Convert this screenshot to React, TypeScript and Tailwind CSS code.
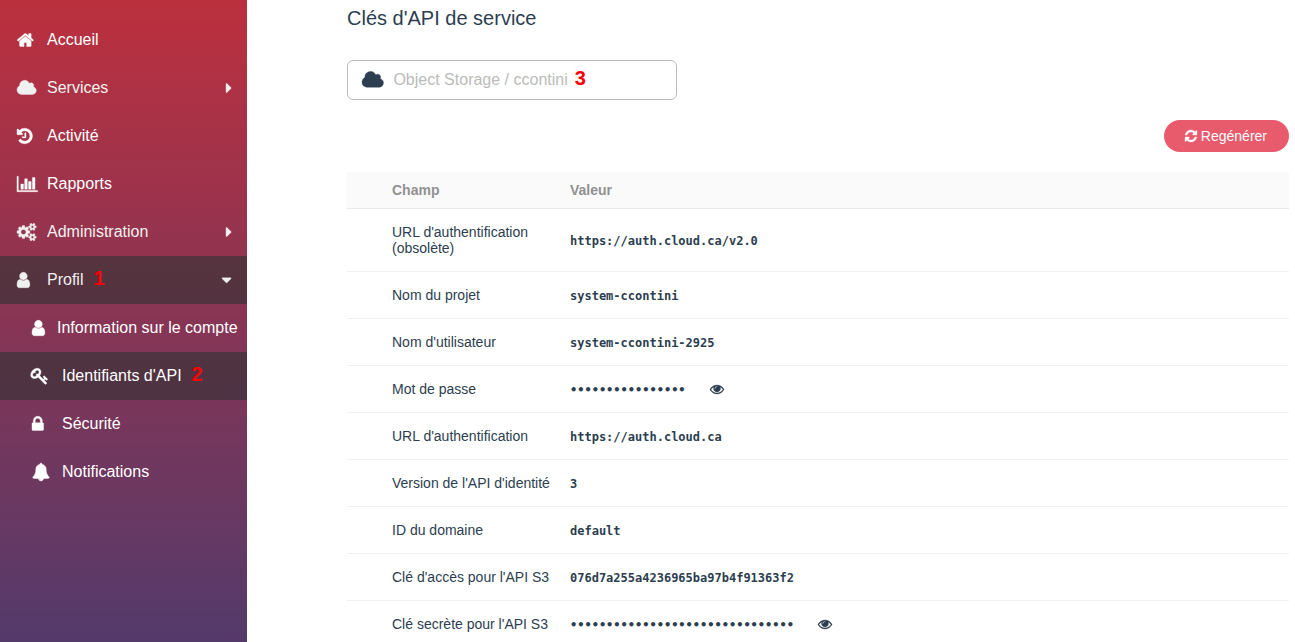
import { useState, type ReactNode } from "react";

const GLYPHS = {
  home: {
    box: "64 0 1664 1792",
    d: "M1472 992v480q0 26-19 45t-45 19h-384v-384h-256v384h-384q-26 0-45-19t-19-45v-480q0-1 .5-3t.5-3l575-474 575 474q1 2 1 6zm223-69l-62 74q-8 9-21 11h-3q-13 0-21-7l-692-577-692 577q-12 8-24 7-13-2-21-11l-62-74q-8-10-7-23.5t11-21.5l719-599q32-26 76-26t76 26l244 204v-195q0-14 9-23t23-9h192q14 0 23 9t9 23v408l219 182q10 8 11 21.5t-7 23.5z",
  },
  cloud: {
    box: "64 0 1920 1792",
    d: "M1984 1152q0 159-112.5 271.5t-271.5 112.5h-1088q-185 0-316.5-131.5t-131.5-316.5q0-132 71-241.5t187-163.5q-2-28-2-43 0-212 150-362t362-150q158 0 286.5 88t187.5 230q70-62 166-62 106 0 181 75t75 181q0 75-41 138 129 30 213 134.5t84 239.5z",
  },
  history: {
    box: "128 0 1536 1792",
    d: "M1664 896q0 156-61 298t-164 245-245 164-298 61q-172 0-327-72.5t-264-204.5q-7-10-6.5-22.5t8.5-20.5l137-138q10-9 25-9 16 2 23 12 73 95 179 147t225 52q104 0 198.5-40.5t163.5-109.5 109.5-163.5 40.5-198.5-40.5-198.5-109.5-163.5-163.5-109.5-198.5-40.5q-98 0-188 35.5t-160 101.5l137 138q31 30 14 69-17 40-59 40h-448q-26 0-45-19t-19-45v-448q0-42 40-59 39-17 69 14l130 129q107-101 244.5-156.5t284.5-55.5q156 0 298 61t245 164 164 245 61 298zm-640-288v448q0 14-9 23t-23 9h-320q-14 0-23-9t-9-23v-64q0-14 9-23t23-9h224v-352q0-14 9-23t23-9h64q14 0 23 9t9 23z",
  },
  chart: {
    box: "0 0 2048 1792",
    d: "M640 896v512h-256v-512h256zm384-512v1024h-256v-1024h256zm1024 1152v128h-2048v-1536h128v1408h1920zm-640-896v768h-256v-768h256zm384-384v1152h-256v-1152h256z",
  },
  cogs: {
    box: "-64 0 1920 1792",
    d: "M832 896q0-106-75-181t-181-75-181 75-75 181 75 181 181 75 181-75 75-181zm768 512q0-52-38-90t-90-38-90 38-38 90q0 53 37.5 90.5t90.5 37.5 90.5-37.5 37.5-90.5zm0-1024q0-52-38-90t-90-38-90 38-38 90q0 53 37.5 90.5t90.5 37.5 90.5-37.5 37.5-90.5zm-384 421v185q0 10-7 19.5t-16 10.5l-155 24q-11 35-32 76 34 48 90 115 7 11 7 20 0 12-7 19-23 30-82.5 89.5t-78.5 59.5q-11 0-21-7l-115-90q-37 19-77 31-11 108-23 155-7 24-30 24h-186q-11 0-20-7.5t-10-17.5l-23-153q-34-10-75-31l-118 89q-7 7-20 7-11 0-21-8-144-133-144-160 0-9 7-19 10-14 41-53t47-61q-23-44-35-82l-152-24q-10-1-17-9.5t-7-19.5v-185q0-10 7-19.5t16-10.5l155-24q11-35 32-76-34-48-90-115-7-11-7-20 0-12 7-20 22-30 82-89t79-59q11 0 21 7l115 90q34-18 77-32 11-108 23-154 7-24 30-24h186q11 0 20 7.5t10 17.5l23 153q34 10 75 31l118-89q8-7 20-7 11 0 21 8 144 133 144 160 0 9-7 19-12 16-42 54t-45 60q23 48 34 82l152 23q10 2 17 10.5t7 19.5zm640 533v140q0 16-149 31-12 27-30 52 51 113 51 138 0 4-4 7-122 71-124 71-8 0-46-47t-52-68q-20 2-30 2t-30-2q-14 21-52 68t-46 47q-2 0-124-71-4-3-4-7 0-25 51-138-18-25-30-52-149-15-149-31v-140q0-16 149-31 13-29 30-52-51-113-51-138 0-4 4-7 4-2 35-20t59-34 30-16q8 0 46 46.5t52 67.5q20-2 30-2t30 2q51-71 92-112l6-2q4 0 124 70 4 3 4 7 0 25-51 138 17 23 30 52 149 15 149 31zm0-1024v140q0 16-149 31-12 27-30 52 51 113 51 138 0 4-4 7-122 71-124 71-8 0-46-47t-52-68q-20 2-30 2t-30-2q-14 21-52 68t-46 47q-2 0-124-71-4-3-4-7 0-25 51-138-18-25-30-52-149-15-149-31v-140q0-16 149-31 13-29 30-52-51-113-51-138 0-4 4-7 4-2 35-20t59-34 30-16q8 0 46 46.5t52 67.5q20-2 30-2t30 2q51-71 92-112l6-2q4 0 124 70 4 3 4 7 0 25-51 138 17 23 30 52 149 15 149 31z",
  },
  user: {
    box: "256 0 1280 1792",
    d: "M1536 1399q0 109-62.5 187t-150.5 78h-854q-88 0-150.5-78t-62.5-187q0-85 8.5-160.5t31.5-152 58.5-131 94-89 134.5-34.5q131 128 313 128t313-128q76 0 134.5 34.5t94 89 58.5 131 31.5 152 8.5 160.5zm-256-887q0 159-112.5 271.5t-271.5 112.5-271.5-112.5-112.5-271.5 112.5-271.5 271.5-112.5 271.5 112.5 112.5 271.5z",
  },
  key: {
    box: "128 0 1664 1792",
    d: "M832 512q0-80-56-136t-136-56-136 56-56 136q0 42 19 83-41-19-83-19-80 0-136 56t-56 136 56 136 136 56 136-56 56-136q0-42-19-83 41 19 83 19 80 0 136-56t56-136zm851 704q0 17-49 66t-66 49q-9 0-28.5-16t-36.5-33-38.5-40-24.5-26l-96 96 220 220q28 28 28 68 0 42-39 81t-81 39q-40 0-68-28l-671-671q-176 131-365 131-163 0-265.5-102.5t-102.5-265.5q0-160 95-313t248-248 313-95q163 0 265.5 102.5t102.5 265.5q0 189-131 365l355 355 96-96q-3-3-26-24.5t-40-38.5-33-36.5-16-28.5q0-17 49-66t66-49q13 0 23 10 6 6 46 44.5t82 79.5 86.5 86 73 78 28.5 41z",
  },
  lock: {
    box: "320 0 1152 1792",
    d: "M640 768h512v-192q0-106-75-181t-181-75-181 75-75 181v192zm832 96v576q0 40-28 68t-68 28h-960q-40 0-68-28t-28-68v-576q0-40 28-68t68-28h32v-192q0-184 132-316t316-132 316 132 132 316v192h32q40 0 68 28t28 68z",
  },
  bell: {
    box: "0 0 1792 1792",
    d: "M912 1696q0-16-16-16-59 0-101.5-42.5t-42.5-101.5q0-16-16-16t-16 16q0 73 51.5 124.5t124.5 51.5q16 0 16-16zm816-288q0 52-38 90t-90 38h-448q0 106-75 181t-181 75-181-75-75-181h-448q-52 0-90-38t-38-90q50-42 91-88t85-119.5 74.5-158.5 50-206 19.5-260q0-152 117-282.5t307-158.5q-8-19-8-39 0-40 28-68t68-28 68 28 28 68q0 20-8 39 190 28 307 158.5t117 282.5q0 139 19.5 260t50 206 74.5 158.5 85 119.5 91 88z",
  },
  refresh: {
    box: "128 0 1536 1792",
    d: "M1639 1056q0 5-1 7-64 268-268 434.5t-478 166.5q-146 0-282.5-55t-243.5-157l-129 129q-19 19-45 19t-45-19-19-45v-448q0-26 19-45t45-19h448q26 0 45 19t19 45-19 45l-137 137q71 66 161 102t187 36q134 0 250-65t186-179q11-17 53-117 8-23 30-23h192q13 0 22.5 9.5t9.5 22.5zm25-800v448q0 26-19 45t-45 19h-448q-26 0-45-19t-19-45 19-45l138-138q-148-137-349-137-134 0-250 65t-186 179q-11 17-53 117-8 23-30 23h-199q-13 0-22.5-9.5t-9.5-22.5v-7q65-268 270-434.5t480-166.5q146 0 284 55.5t245 156.5l130-129q19-19 45-19t45 19 19 45z",
  },
  eye: {
    box: "0 0 1792 1792",
    d: "M1664 960q-152-236-381-353 61 104 61 225 0 185-131.5 316.5t-316.5 131.5-316.5-131.5-131.5-316.5q0-121 61-225-229 117-381 353 133 205 333.5 326.5t434.5 121.5 434.5-121.5 333.5-326.5zm-720-384q0-20-14-34t-34-14q-125 0-214.5 89.5t-89.5 214.5q0 20 14 34t34 14 34-14 14-34q0-86 61-147t147-61q20 0 34-14t14-34zm848 384q0 34-20 69-140 230-376.5 368.5t-499.5 138.5-499.5-139-376.5-368q-20-35-20-69t20-69q140-229 376.5-368t499.5-139 499.5 139 376.5 368q20 35 20 69z",
  },
  caretRight: { box: "0 0 576 1792", d: "M576 896q0 26-19 45l-448 448q-19 19-45 19t-45-19-19-45v-896q0-26 19-45t45-19 45 19l448 448q19 19 19 45z" },
  caretDown: { box: "0 0 1024 1792", d: "M1024 704q0 26-19 45l-448 448q-19 19-45 19t-45-19l-448-448q-19-19-19-45t19-45 45-19h896q26 0 45 19t19 45z" },
};

type GlyphName = keyof typeof GLYPHS;

function Glyph({ name, className }: { name: GlyphName; className: string }) {
  return (
    <svg
      viewBox={GLYPHS[name].box}
      className={`w-auto shrink-0 overflow-visible fill-current stroke-current ${className}`}
      strokeWidth={40}
      aria-hidden="true"
    >
      <path d={GLYPHS[name].d} />
    </svg>
  );
}

function Step({ children }: { children: ReactNode }) {
  return <span className="pb-1 text-xl leading-6 font-bold text-[#ff0000]">{children}</span>;
}

type Item = { icon: GlyphName; label: string; caret?: GlyphName; step?: string; active?: boolean };

const MAIN_ITEMS: Item[] = [
  { icon: "home", label: "Accueil" },
  { icon: "cloud", label: "Services", caret: "caretRight" },
  { icon: "history", label: "Activité" },
  { icon: "chart", label: "Rapports" },
  { icon: "cogs", label: "Administration", caret: "caretRight" },
  { icon: "user", label: "Profil", caret: "caretDown", step: "1", active: true },
];

const PROFILE_ITEMS: Item[] = [
  { icon: "user", label: "Information sur le compte" },
  { icon: "key", label: "Identifiants d'API", step: "2", active: true },
  { icon: "lock", label: "Sécurité" },
  { icon: "bell", label: "Notifications" },
];

function NavLink({ item, nested = false }: { item: Item; nested?: boolean }) {
  const tight = nested && item.icon === "user";
  return (
    <a
      href="#"
      className={`flex h-12 items-center whitespace-nowrap ${nested ? "pl-8" : "pr-4 pl-[17px]"} ${
        item.active ? "bg-[#353236]/65" : ""
      } ${item.caret ? "text-[#f0f0f0]" : "text-white"}`}
    >
      <span className={`flex shrink-0 pb-px ${tight ? "w-[25px]" : "w-[30px]"}`}>
        <Glyph name={item.icon} className="h-[18px]" />
      </span>
      <span>{item.label}</span>
      {item.step && (
        <span className="ml-2.5 flex">
          <Step>{item.step}</Step>
        </span>
      )}
      {item.caret && <Glyph name={item.caret} className="ml-auto h-4" />}
    </a>
  );
}

type Field = { label: string; value: string; secret?: boolean };

const FIELDS: Field[] = [
  { label: "URL d'authentification (obsolète)", value: "https://auth.cloud.ca/v2.0" },
  { label: "Nom du projet", value: "system-ccontini" },
  { label: "Nom d'utilisateur", value: "system-ccontini-2925" },
  { label: "Mot de passe", value: "•".repeat(16), secret: true },
  { label: "URL d'authentification", value: "https://auth.cloud.ca" },
  { label: "Version de l'API d'identité", value: "3" },
  { label: "ID du domaine", value: "default" },
  { label: "Clé d'accès pour l'API S3", value: "076d7a255a4236965ba97b4f91363f2" },
  { label: "Clé secrète pour l'API S3", value: "•".repeat(31), secret: true },
];

export default function App() {
  const [open, setOpen] = useState(true);
  return (
    <div className="flex h-screen overflow-hidden bg-white font-['Liberation_Sans',Arial,sans-serif] text-[#2c3e50]">
      <nav className="w-[247px] shrink-0 bg-linear-to-b/srgb from-[#bc303e] to-[#533a6b] pt-4">
        <ul>
          {MAIN_ITEMS.map((item) => (
            <li key={item.label} onClick={() => item.active && setOpen(!open)}>
              <NavLink item={item} />
            </li>
          ))}
          {open &&
            PROFILE_ITEMS.map((item) => (
              <li key={item.label}>
                <NavLink item={item} nested />
              </li>
            ))}
        </ul>
      </nav>

      <main className="min-w-0 flex-1 pt-1.5 pr-1.5 pl-[100px]">
        <h1 className="text-xl leading-6">Clés d'API de service</h1>

        <button
          type="button"
          className="mt-[30px] flex h-10 w-[330px] items-center rounded-md border border-[#bbbbbb] pl-3.5 text-left"
        >
          <Glyph name="cloud" className="h-5" />
          <span className="ml-2.5 text-[#bbbbbb]">Object Storage / ccontini</span>
          <span className="ml-[7px] flex">
            <Step>3</Step>
          </span>
        </button>

        <div className="mt-5 flex justify-end">
          <button
            type="button"
            className="flex h-8 items-center gap-1 rounded-full bg-[#e85b6c] pr-[22px] pl-[21px] text-sm text-white"
          >
            <Glyph name="refresh" className="h-3.5" />
            Regénérer
          </button>
        </div>

        <table className="mt-5 w-full table-fixed border-collapse text-left text-sm leading-4">
          <thead>
            <tr className="border-b border-[#e9eaeb] bg-[#fafafa] text-[#919191]">
              <th className="w-[223px] py-2.5 pl-[45px] font-bold">Champ</th>
              <th className="py-2.5 font-bold">Valeur</th>
            </tr>
          </thead>
          <tbody>
            {FIELDS.map((field) => (
              <tr key={field.label} className="border-b border-[#f1f1f1]">
                <td className="py-[15px] pr-4 pl-[45px]">{field.label}</td>
                <td className="py-3.5">
                  <div className="flex items-center gap-6">
                    <code className="pt-0.5 font-['DejaVu_Sans_Mono',monospace] text-xs leading-4 font-bold">
                      {field.value}
                    </code>
                    {field.secret && (
                      <button type="button" aria-label="Afficher">
                        <Glyph name="eye" className="h-3.5" />
                      </button>
                    )}
                  </div>
                </td>
              </tr>
            ))}
          </tbody>
        </table>
      </main>
    </div>
  );
}
